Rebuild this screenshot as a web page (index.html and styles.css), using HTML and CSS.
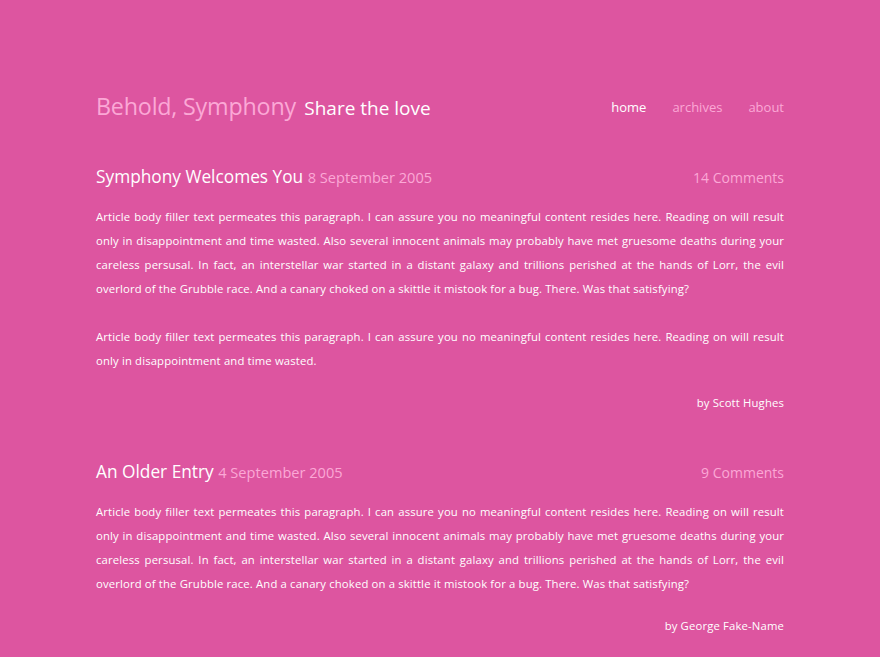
FILE: index.html
```html
<!DOCTYPE html>
<html>
<head>
<meta charset="utf-8">
<link rel="stylesheet" href="styles.css">
</head>
<body>
<div class="page">
  <header class="masthead">
    <h1 class="brand"><span class="site">Behold, Symphony</span> <span class="tagline">Share the love</span></h1>
    <nav class="nav">
      <a class="current" href="#">home</a>
      <a href="#">archives</a>
      <a href="#">about</a>
    </nav>
  </header>

  <article class="post">
    <div class="post-head">
      <h2 class="post-title">Symphony Welcomes You <span class="date">8 September 2005</span></h2>
      <a class="comments" href="#">14 Comments</a>
    </div>
    <p>Article body filler text permeates this paragraph. I can assure you no meaningful content resides here. Reading on will result only in disappointment and time wasted. Also several innocent animals may probably have met gruesome deaths during your careless persusal. In fact, an interstellar war started in a distant galaxy and trillions perished at the hands of Lorr, the evil overlord of the Grubble race. And a canary choked on a skittle it mistook for a bug. There. Was that satisfying?</p>
    <p>Article body filler text permeates this paragraph. I can assure you no meaningful content resides here. Reading on will result only in disappointment and time wasted.</p>
    <p class="author">by Scott Hughes</p>
  </article>

  <article class="post">
    <div class="post-head">
      <h2 class="post-title">An Older Entry <span class="date">4 September 2005</span></h2>
      <a class="comments" href="#">9 Comments</a>
    </div>
    <p>Article body filler text permeates this paragraph. I can assure you no meaningful content resides here. Reading on will result only in disappointment and time wasted. Also several innocent animals may probably have met gruesome deaths during your careless persusal. In fact, an interstellar war started in a distant galaxy and trillions perished at the hands of Lorr, the evil overlord of the Grubble race. And a canary choked on a skittle it mistook for a bug. There. Was that satisfying?</p>
    <p class="author">by George Fake-Name</p>
  </article>
</div>
</body>
</html>
```

FILE: styles.css
```css
html, body {
  margin: 0;
  padding: 0;
  background: #dd55a0;
}
body {
  font-family: "Open Sans", "Lato", sans-serif;
  color: #ffffff;
}
.page {
  width: 688px;
  margin: 0 auto;
  padding-top: 87px;
}
.masthead {
  display: flex;
  justify-content: space-between;
  align-items: flex-start;
  height: 75px;
}
.brand {
  margin: 0;
  font-weight: normal;
  line-height: 32px;
}
.site {
  color: #fba8d6;
  font-size: 23.3px;
  letter-spacing: -0.2px;
}
.tagline {
  color: #ffffff;
  font-size: 19px;
}
.nav {
  display: flex;
  gap: 26px;
  line-height: 32px;
  padding-top: 4px;
}
.nav a {
  color: #fba8d6;
  text-decoration: none;
  font-size: 13px;
}
.nav a.current {
  color: #ffffff;
}
.post {
  padding-bottom: 45px;
}
.post-head {
  display: flex;
  justify-content: space-between;
  align-items: baseline;
  margin-bottom: 13px;
}
.post-title {
  margin: 0;
  font-weight: normal;
  font-size: 17.3px;
  line-height: 30px;
}
.date {
  color: #fba8d6;
  font-size: 14.6px;
}
.comments {
  color: #fba8d6;
  font-size: 14px;
  text-decoration: none;
}
.post p {
  margin: 0 0 24px 0;
  font-size: 11.3px;
  letter-spacing: 0.15px;
  line-height: 24px;
  text-align: justify;
}
.post p.author {
  text-align: right;
  margin-top: -3px;
  margin-bottom: 0;
  line-height: 18px;
}
```
